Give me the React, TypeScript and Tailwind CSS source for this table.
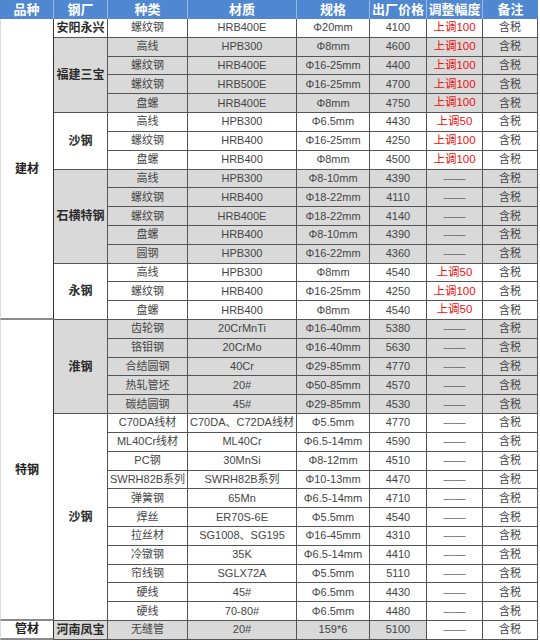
import React from "react";

type Row = [string, string, string, string, string];
type Mill = { name: string; gray: boolean; rows: Row[]; whiteTail?: boolean };
type Group = { cat: string; mills: Mill[] };

const groups: Group[] = [
  {
    cat: "建材",
    mills: [
      { name: "安阳永兴", gray: false, rows: [["螺纹钢", "HRB400E", "Φ20mm", "4100", "上调100"]] },
      {
        name: "福建三宝",
        gray: true,
        rows: [
          ["高线", "HPB300", "Φ8mm", "4600", "上调100"],
          ["螺纹钢", "HRB400E", "Φ16-25mm", "4400", "上调100"],
          ["螺纹钢", "HRB500E", "Φ16-25mm", "4700", "上调100"],
          ["盘螺", "HRB400E", "Φ8mm", "4750", "上调100"],
        ],
      },
      {
        name: "沙钢",
        gray: false,
        rows: [
          ["高线", "HPB300", "Φ6.5mm", "4430", "上调50"],
          ["螺纹钢", "HRB400", "Φ16-25mm", "4250", "上调100"],
          ["盘螺", "HRB400", "Φ8mm", "4500", "上调100"],
        ],
      },
      {
        name: "石横特钢",
        gray: true,
        rows: [
          ["高线", "HPB300", "Φ8-10mm", "4390", ""],
          ["螺纹钢", "HRB400", "Φ18-22mm", "4110", ""],
          ["螺纹钢", "HRB400E", "Φ18-22mm", "4140", ""],
          ["盘螺", "HRB400", "Φ8-10mm", "4390", ""],
          ["圆钢", "HPB300", "Φ16-22mm", "4360", ""],
        ],
      },
      {
        name: "永钢",
        gray: false,
        rows: [
          ["高线", "HPB300", "Φ8mm", "4540", "上调50"],
          ["螺纹钢", "HRB400", "Φ16-25mm", "4250", "上调100"],
          ["盘螺", "HRB400", "Φ8mm", "4540", "上调50"],
        ],
      },
    ],
  },
  {
    cat: "特钢",
    mills: [
      {
        name: "淮钢",
        gray: true,
        rows: [
          ["齿轮钢", "20CrMnTi", "Φ16-40mm", "5380", ""],
          ["铬钼钢", "20CrMo", "Φ16-40mm", "5630", ""],
          ["合结圆钢", "40Cr", "Φ29-85mm", "4770", ""],
          ["热轧管坯", "20#", "Φ50-85mm", "4570", ""],
          ["碳结圆钢", "45#", "Φ29-85mm", "4530", ""],
        ],
      },
      {
        name: "沙钢",
        gray: false,
        rows: [
          ["C70DA线材", "C70DA、C72DA线材", "Φ5.5mm", "4770", ""],
          ["ML40Cr线材", "ML40Cr", "Φ6.5-14mm", "4590", ""],
          ["PC钢", "30MnSi", "Φ8-12mm", "4510", ""],
          ["SWRH82B系列", "SWRH82B系列", "Φ10-13mm", "4470", ""],
          ["弹簧钢", "65Mn", "Φ6.5-14mm", "4710", ""],
          ["焊丝", "ER70S-6E", "Φ5.5mm", "4540", ""],
          ["拉丝材", "SG1008、SG195", "Φ16-45mm", "4310", ""],
          ["冷镦钢", "35K", "Φ6.5-14mm", "4410", ""],
          ["帘线钢", "SGLX72A", "Φ5.5mm", "5110", ""],
          ["硬线", "45#", "Φ6.5mm", "4430", ""],
          ["硬线", "70-80#", "Φ6.5mm", "4480", ""],
        ],
      },
    ],
  },
  {
    cat: "管材",
    mills: [{ name: "河南凤宝", gray: true, whiteTail: true, rows: [["无缝管", "20#", "159*6", "5100", ""]] }],
  },
];

const spanClass: Record<number, string> = {
  1: "row-span-1",
  3: "row-span-3",
  4: "row-span-4",
  5: "row-span-5",
  11: "row-span-11",
  16: "row-span-[16]",
};

const headers = ["品种", "钢厂", "种类", "材质", "规格", "出厂价格", "调整幅度", "备注"];

const font = "font-['Liberation_Sans','Noto_Sans_CJK_SC',sans-serif]";

export default function App() {
  const cells: React.ReactNode[] = [];
  headers.forEach((h, i) => {
    cells.push(
      <div
        key={"h" + i}
        className={`flex items-center justify-center bg-[#4f87d0] text-[13px] font-bold text-white ${
          i < 7 ? "border-r border-[#9ab8e2]" : ""
        }`}
      >
        {h}
      </div>
    );
  });

  groups.forEach((g, gi) => {
    const total = g.mills.reduce((s, m) => s + m.rows.length, 0);
    g.mills.forEach((m, mi) => {
      m.rows.forEach((r, ri) => {
        if (mi === 0 && ri === 0) {
          cells.push(
            <div
              key={`c${gi}`}
              className={`${spanClass[total]} flex items-center justify-center border-l border-r border-b-2 border-l-[#dddddd] border-r-[#333333] border-b-[#8a8a8a] bg-white text-[12px] font-bold text-[#222]`}
            >
              {g.cat}
            </div>
          );
        }
        const bg = m.gray ? "bg-[#d9d9d9]" : "bg-white";
        if (ri === 0) {
          cells.push(
            <div
              key={`m${gi}-${mi}`}
              className={`${spanClass[m.rows.length]} flex items-center justify-center border-r border-b border-[#555] ${bg} text-[12px] font-bold text-[#2a2a2a]`}
            >
              {m.name}
            </div>
          );
        }
        const tailBg = m.whiteTail ? "bg-white" : bg;
        const base = "flex items-center justify-center whitespace-nowrap overflow-hidden border-r border-b border-[#555] text-[11px] text-[#454545]";
        cells.push(
          <div key={`r${gi}-${mi}-${ri}-0`} className={`${base} ${bg}`}>{r[0]}</div>,
          <div key={`r${gi}-${mi}-${ri}-1`} className={`${base} ${bg}`}>{r[1]}</div>,
          <div key={`r${gi}-${mi}-${ri}-2`} className={`${base} ${bg}`}>{r[2]}</div>,
          <div key={`r${gi}-${mi}-${ri}-3`} className={`${base} ${bg}`}>{r[3]}</div>,
          <div key={`r${gi}-${mi}-${ri}-4`} className={`${base} ${tailBg}`}>
            {r[4] ? <span className="text-[11.5px] text-[#ee1111]">{r[4]}</span> : <span className="text-[#666]">——</span>}
          </div>,
          <div key={`r${gi}-${mi}-${ri}-5`} className={`${base} ${tailBg}`}>含税</div>
        );
      });
    });
  });

  return (
    <div className={`h-[643px] w-[540px] bg-white ${font}`}>
      <div className="grid w-[538px] grid-cols-[54px_54px_80px_109px_73px_57px_56px_55px] grid-rows-[19px_repeat(33,18.82px)] leading-none">
        {cells}
      </div>
    </div>
  );
}
